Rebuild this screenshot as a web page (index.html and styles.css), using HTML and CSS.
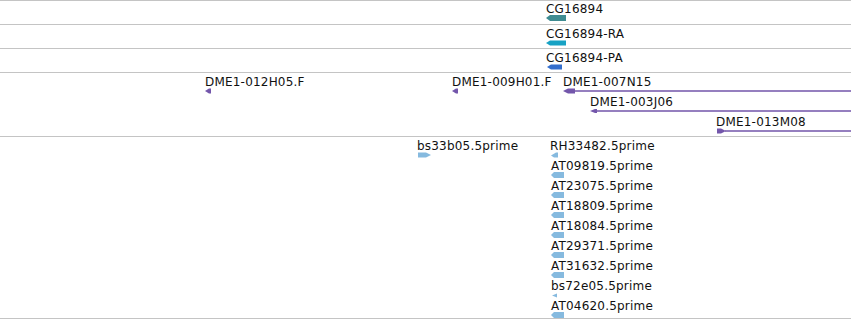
FILE: index.html
```html
<!DOCTYPE html>
<html>
<head>
<meta charset="utf-8">
<title>Tracks</title>
<link rel="stylesheet" href="styles.css">
</head>
<body>
<div class="panel">
  <div class="track h23">
    <div class="feat" style="left:546px;top:2px">
      <span class="lbl">CG16894</span>
      <svg class="glyph teal" width="20" height="6"><polygon points="0,3 4,0 20,0 20,6 4,6"/></svg>
    </div>
  </div>
  <div class="track h23">
    <div class="feat" style="left:546px;top:3px">
      <span class="lbl">CG16894-RA</span>
      <svg class="glyph cyan" width="20" height="6"><polygon points="0,3 4,0.5 20,0.5 20,5.5 4,5.5"/></svg>
    </div>
  </div>
  <div class="track h23">
    <div class="feat" style="left:546px;top:3px">
      <span class="lbl">CG16894-PA</span>
      <svg class="glyph blue" width="17" height="6"><polygon points="1,3 5,0.5 16,0.5 16,5.5 5,5.5"/></svg>
    </div>
  </div>
  <div class="track h63">
    <div class="feat" style="left:205px;top:3px">
      <span class="lbl">DME1-012H05.F</span>
      <svg class="glyph purple" width="7" height="6"><polygon points="0,3 4,0.5 6,0.5 6,5.5 4,5.5"/></svg>
    </div>
    <div class="feat" style="left:452px;top:3px">
      <span class="lbl">DME1-009H01.F</span>
      <svg class="glyph purple" width="7" height="6"><polygon points="0,3 4,0.5 6,0.5 6,5.5 4,5.5"/></svg>
    </div>
    <div class="feat" style="left:563px;top:3px">
      <span class="lbl">DME1-007N15</span>
      <svg class="glyph purple" width="288" height="6"><polygon points="0,3 5,0.5 12,0.5 12,5.5 5,5.5"/><rect x="12" y="2.25" width="276" height="1.5"/></svg>
    </div>
    <div class="feat" style="left:590px;top:23px">
      <span class="lbl">DME1-003J06</span>
      <svg class="glyph purple" width="261" height="6"><polygon points="0,3 5,1 7,1 7,5 5,5"/><rect x="7" y="2.25" width="254" height="1.5"/></svg>
    </div>
    <div class="feat" style="left:716px;top:43px">
      <span class="lbl">DME1-013M08</span>
      <svg class="glyph purple" width="135" height="6"><polygon points="1,0.5 5,0.5 10,3 5,5.5 1,5.5"/><rect x="9" y="2.25" width="126" height="1.5"/></svg>
    </div>
  </div>
  <div class="track h181">
    <div class="feat" style="left:417px;top:3px">
      <span class="lbl">bs33b05.5prime</span>
      <svg class="glyph light" width="14" height="6"><polygon points="1,0.5 9,0.5 14,3 9,5.5 1,5.5"/></svg>
    </div>
    <div class="feat" style="left:550px;top:3px">
      <span class="lbl">RH33482.5prime</span>
      <svg class="glyph light" width="8" height="6"><polygon points="1,3.5 6,0.5 8,0.5 8,5.5 4,5.5"/></svg>
    </div>
    <div class="feat" style="left:551px;top:23px">
      <span class="lbl">AT09819.5prime</span>
      <svg class="glyph light" width="13" height="6"><polygon points="0,3 3,0 13,0 13,6 3,6"/></svg>
    </div>
    <div class="feat" style="left:551px;top:43px">
      <span class="lbl">AT23075.5prime</span>
      <svg class="glyph light" width="13" height="6"><polygon points="0,3 3,0 13,0 13,6 3,6"/></svg>
    </div>
    <div class="feat" style="left:551px;top:63px">
      <span class="lbl">AT18809.5prime</span>
      <svg class="glyph light" width="13" height="6"><polygon points="0,3 3,0 13,0 13,6 3,6"/></svg>
    </div>
    <div class="feat" style="left:551px;top:83px">
      <span class="lbl">AT18084.5prime</span>
      <svg class="glyph light" width="13" height="6"><polygon points="0,3 3,0 13,0 13,6 3,6"/></svg>
    </div>
    <div class="feat" style="left:551px;top:103px">
      <span class="lbl">AT29371.5prime</span>
      <svg class="glyph light" width="13" height="6"><polygon points="0,3 3,0 13,0 13,6 3,6"/></svg>
    </div>
    <div class="feat" style="left:551px;top:123px">
      <span class="lbl">AT31632.5prime</span>
      <svg class="glyph light" width="13" height="6"><polygon points="0,3 3,0 13,0 13,6 3,6"/></svg>
    </div>
    <div class="feat" style="left:551px;top:143px">
      <span class="lbl">bs72e05.5prime</span>
      <svg class="glyph light" width="8" height="6"><polygon points="1,3.5 6,1.5 6,5.5"/></svg>
    </div>
    <div class="feat" style="left:551px;top:163px">
      <span class="lbl">AT04620.5prime</span>
      <svg class="glyph light" width="13" height="6"><polygon points="0,3 3,0 13,0 13,6 3,6"/></svg>
    </div>
  </div>
</div>
</body>
</html>
```
FILE: styles.css
```css
html, body {
  margin: 0;
  padding: 0;
  background: #ffffff;
}

.panel {
  width: 851px;
  border-bottom: 1px solid #c4c4c4;
  font-family: "DejaVu Sans", Verdana, sans-serif;
  font-size: 12px;
  letter-spacing: 0.2px;
  color: #111111;
}

.track {
  position: relative;
  border-top: 1px solid #c4c4c4;
  overflow: hidden;
}

.h23 { height: 23px; }
.h63 { height: 63px; }
.h181 { height: 181px; }

.feat {
  position: absolute;
  display: flex;
  flex-direction: column;
  align-items: flex-start;
}

.lbl {
  display: block;
  line-height: 12px;
  height: 12px;
  white-space: nowrap;
}

.glyph {
  display: block;
}

.teal { fill: #3f8c92; }
.cyan { fill: #17a2c4; }
.blue { fill: #336ecd; }
.purple { fill: #7356ab; }
.light { fill: #86badf; }
```
